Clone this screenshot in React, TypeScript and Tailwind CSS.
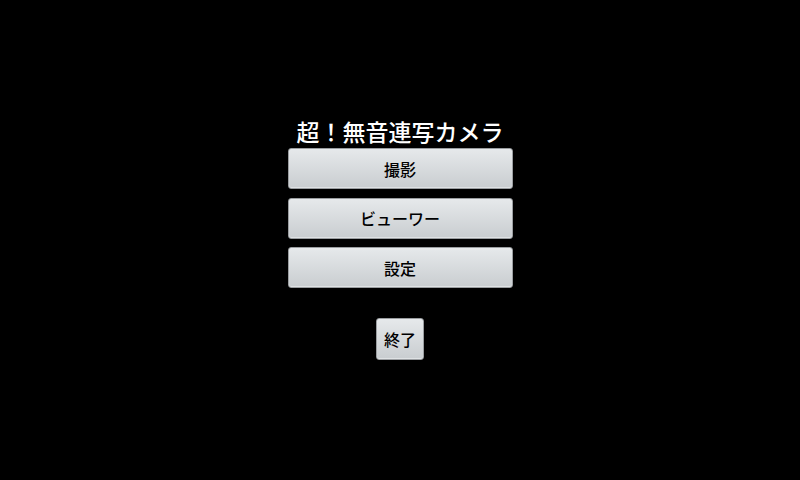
import React from 'react';

const menuItems = ['撮影', 'ビューワー', '設定'];

const buttonClass =
  'rounded-[3px] border border-[#9a9da0] bg-gradient-to-b from-[#e6e9eb] to-[#c9cdd0] text-black text-[16px] font-medium leading-none flex items-center justify-center shadow-[inset_0_-1px_0_#dfe2e4]';

export default function App() {
  return (
    <div
      className="w-[800px] h-[480px] bg-black flex flex-col items-center pt-[116px]"
      style={{ fontFamily: '"Noto Sans CJK JP", "Noto Sans", sans-serif' }}
    >
      <h1 className="text-white text-[23px] leading-[30px] font-medium mb-[2px]">超！無音連写カメラ</h1>

      <div className="flex flex-col gap-[8.5px]">
        {menuItems.map((label) => (
          <button key={label} className={`w-[225px] h-[41px] ${buttonClass}`}>
            {label}
          </button>
        ))}
      </div>

      <button className={`mt-[30px] w-[48px] h-[42px] ${buttonClass}`}>終了</button>
    </div>
  );
}
